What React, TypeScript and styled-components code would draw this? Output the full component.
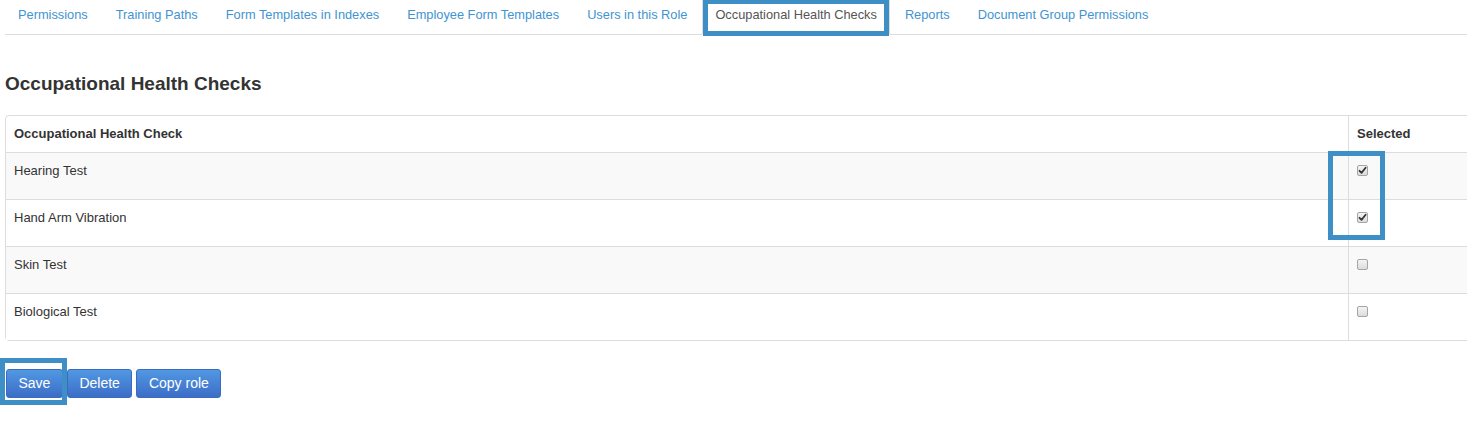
import React from "react";
import styled, { createGlobalStyle, css } from "styled-components";

const Global = createGlobalStyle`
  html { overflow: hidden; }
  html, body { margin: 0; padding: 0; background: #fff; }
  body { font-family: "Liberation Sans", Arial, sans-serif; font-size: 13px; color: #333; }
`;

const HL = "#3d8fc6";

const Page = styled.div`
  width: 1467px;
  min-height: 429px;
  padding-left: 5px;
  box-sizing: border-box;
`;

const Tabs = styled.ul`
  display: flex;
  list-style: none;
  margin: 0;
  padding: 0;
  border-bottom: 1px solid #ddd;
  margin-right: -5px;
`;

const Tab = styled.li<{ $active?: boolean }>`
  position: relative;
  margin-right: 4px;
  margin-bottom: -1px;
  a {
    display: block;
    padding: 5px 12px 9px;
    line-height: 20px;
    font-size: 12.8px;
    color: #3f94d1;
    text-decoration: none;
    border: 1px solid transparent;
    border-top: 0;
    margin: 0 -1px;
  }
  &:first-child a { padding-left: 13px; }
  ${(p) =>
    p.$active &&
    css`
      a {
        color: #555;
        background: #fff;
        border-color: #ddd;
        border-bottom-color: #fff;
      }
      &::after {
        content: "";
        position: absolute;
        left: 0;
        top: 0;
        right: 0;
        height: 36px;
        border: 5px solid ${HL};
        border-top-width: 4px;
        box-sizing: border-box;
        pointer-events: none;
      }
    `}
`;

const Heading = styled.h3`
  margin: 39px 0 21px;
  font-size: 19px;
  line-height: 20px;
  font-weight: bold;
  color: #333;
`;

const TableWrap = styled.div`
  position: relative;
  width: 1472px;
`;

const Table = styled.table`
  width: 100%;
  border-collapse: separate;
  border-spacing: 0;
  border: 1px solid #ddd;
  border-radius: 4px;
  font-size: 13px;
  th, td {
    padding: 8px;
    line-height: 20px;
    text-align: left;
    vertical-align: top;
  }
  th {
    font-weight: bold;
    color: #333;
    height: 20px;
  }
  td {
    border-top: 1px solid #ddd;
    height: 20px;
    padding-bottom: 18px;
  }
  th + th, td + td {
    border-left: 1px solid #ddd;
  }
`;

const Row = styled.tr<{ $striped?: boolean }>`
  background: ${(p) => (p.$striped ? "#f9f9f9" : "#fff")};
`;

const FirstCol = styled.th`
  width: 1326px;
`;

const Box = styled.span`
  display: flex;
  align-items: center;
  justify-content: center;
  width: 11px;
  height: 11px;
  margin-top: 4px;
  border: 1px solid #a5a5a5;
  border-radius: 2px;
  background: linear-gradient(#f4f4f4, #dcdcdc);
  box-sizing: border-box;
  svg { display: block; }
`;

const CheckHL = styled.div`
  position: absolute;
  left: 1323px;
  top: 36px;
  width: 57px;
  height: 89px;
  border: 5px solid ${HL};
  box-sizing: border-box;
  pointer-events: none;
`;

const Buttons = styled.div`
  display: flex;
  gap: 4px;
  margin-top: 28px;
  margin-left: 1px;
`;

const BtnWrap = styled.div<{ $highlight?: boolean }>`
  ${(p) =>
    p.$highlight &&
    css`
      position: relative;
      z-index: 1;
      &::after {
        content: "";
        position: absolute;
        left: -6px;
        top: -11px;
        right: -4px;
        bottom: -7px;
        border: 5px solid ${HL};
        box-sizing: border-box;
        pointer-events: none;
      }
    `}
`;

const Button = styled.button`
  display: block;
  font-family: "Liberation Sans", Arial, sans-serif;
  font-size: 14px;
  line-height: 19px;
  padding: 4px 11.5px 4px;
  color: #fff;
  border: 1px solid #3a6bbf;
  border-radius: 3px;
  background: linear-gradient(#5198e2, #3c6dc7);
  cursor: pointer;
`;

function Checkbox({ checked }: { checked?: boolean }) {
  return (
    <Box>
      {checked && (
        <svg width="9" height="9" viewBox="0 0 9 9">
          <path d="M1.5 4.8 L3.6 6.8 L7.6 1.8" fill="none" stroke="#333" strokeWidth="1.8" strokeLinecap="round" strokeLinejoin="round" />
        </svg>
      )}
    </Box>
  );
}

const tabs = [
  "Permissions",
  "Training Paths",
  "Form Templates in Indexes",
  "Employee Form Templates",
  "Users in this Role",
  "Occupational Health Checks",
  "Reports",
  "Document Group Permissions",
];

const checks = [
  { name: "Hearing Test", checked: true },
  { name: "Hand Arm Vibration", checked: true },
  { name: "Skin Test", checked: false },
  { name: "Biological Test", checked: false },
];

export default function App() {
  return (
    <Page>
      <Global />
      <Tabs>
        {tabs.map((t) => (
          <Tab key={t} $active={t === "Occupational Health Checks"}>
            <a href="#">{t}</a>
          </Tab>
        ))}
      </Tabs>
      <Heading>Occupational Health Checks</Heading>
      <TableWrap>
        <Table>
          <thead>
            <tr>
              <FirstCol>Occupational Health Check</FirstCol>
              <th>Selected</th>
            </tr>
          </thead>
          <tbody>
            {checks.map((c, i) => (
              <Row key={c.name} $striped={i % 2 === 0}>
                <td>{c.name}</td>
                <td>
                  <Checkbox checked={c.checked} />
                </td>
              </Row>
            ))}
          </tbody>
        </Table>
        <CheckHL />
      </TableWrap>
      <Buttons>
        <BtnWrap $highlight>
          <Button>Save</Button>
        </BtnWrap>
        <BtnWrap>
          <Button>Delete</Button>
        </BtnWrap>
        <BtnWrap>
          <Button>Copy role</Button>
        </BtnWrap>
      </Buttons>
    </Page>
  );
}
